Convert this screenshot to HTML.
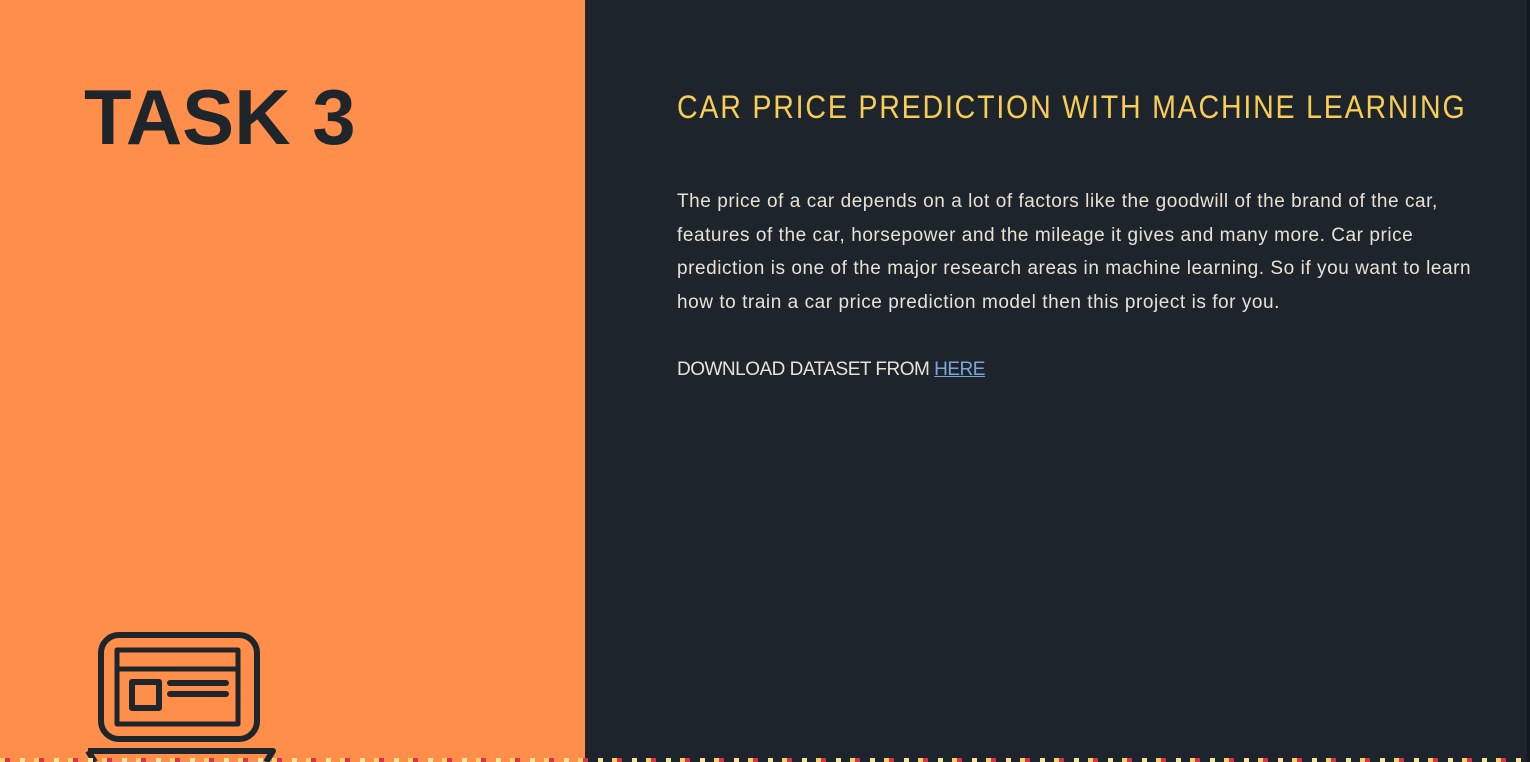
<!DOCTYPE html>
<html><head><meta charset="utf-8"><style>
html,body{margin:0;padding:0;width:1530px;height:762px;overflow:hidden;background:#1e242b;font-family:"Liberation Sans",sans-serif}
.left{position:absolute;left:0;top:0;width:585px;height:762px;background:#ff8e4a}
.task{position:absolute;left:84px;top:74px;font-size:78px;font-weight:bold;color:#1e262c;letter-spacing:0px;line-height:86px}
.right{position:absolute;left:585px;top:0;width:942px;height:762px;background:#1e242b}
.sb{position:absolute;left:1527px;top:0;width:3px;height:762px;background:#14181c}
h1{position:absolute;left:677px;top:88px;margin:0;font-weight:normal;font-size:32px;color:#f7cd55;letter-spacing:2px;white-space:nowrap;transform:scaleX(0.893);transform-origin:left top;line-height:38px}
.p{position:absolute;left:677px;top:185px;font-size:19px;line-height:33.6px;color:#e9e2d4;white-space:nowrap;letter-spacing:0.55px}
.d{position:absolute;left:677px;top:353px;font-size:19px;line-height:33px;color:#e9e2d4;white-space:nowrap;letter-spacing:-0.5px}
.d a{color:#7aa7d6;text-decoration:underline}
.strip{position:absolute;left:0;top:758px;width:1527px;height:4px;background:repeating-linear-gradient(90deg,#f3d36a 0 5px,#d8334a 5px 10px,transparent 10px 20px,#f6e3a0 20px 25px,transparent 25px 34px)}
</style></head><body>
<div class="left"><div class="task">TASK 3</div>
<svg style="position:absolute;left:0;top:0" width="585" height="762">
<g fill="none" stroke="#1e262c" stroke-linejoin="round">
<rect x="101" y="635" width="156" height="104" rx="18" stroke-width="6"/>
<rect x="117" y="650" width="121" height="74" stroke-width="5"/>
<line x1="117" y1="669" x2="238" y2="669" stroke-width="5"/>
<rect x="132" y="682" width="27" height="26" stroke-width="6"/>
<line x1="170" y1="683" x2="226" y2="683" stroke-width="6" stroke-linecap="round"/>
<line x1="170" y1="694" x2="226" y2="694" stroke-width="6" stroke-linecap="round"/>
<path d="M88 751 L273 751 L266 762 M95 762 L88 751" stroke-width="6"/>
</g></svg></div>
<div class="right"></div>
<div class="sb"></div>
<h1>CAR PRICE PREDICTION WITH MACHINE LEARNING</h1>
<div class="p">The price of a car depends on a lot of factors like the goodwill of the brand of the car,<br>features of the car, horsepower and the mileage it gives and many more. Car price<br>prediction is one of the major research areas in machine learning. So if you want to learn<br>how to train a car price prediction model then this project is for you.</div>
<div class="d">DOWNLOAD DATASET FROM <a>HERE</a></div>
<div class="strip"></div>
</body></html>
